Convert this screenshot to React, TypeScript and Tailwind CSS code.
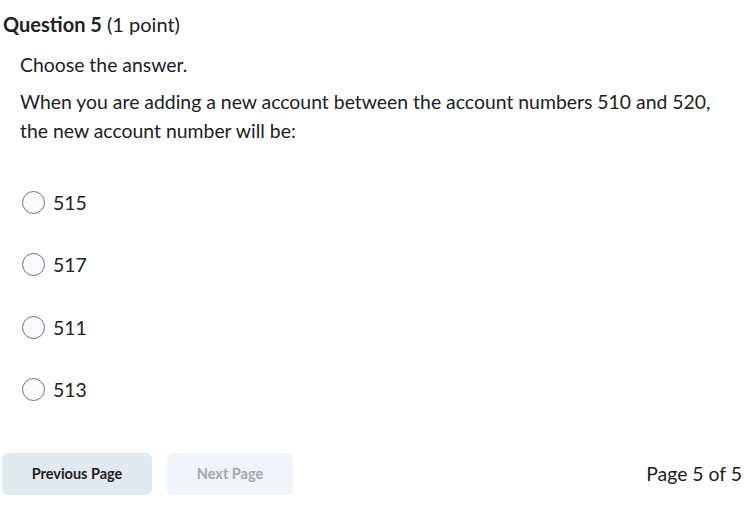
import React from 'react';

const options = ['515', '517', '511', '513'];

const App = () => {
  return (
    <div className="w-[756px] h-[506px] bg-white text-[#202122] font-['Lato','Liberation_Sans',sans-serif] overflow-hidden">
      <h2 className="pl-[3px] pt-[10px] text-[20px] leading-[28px]">
        <span className="font-bold">Question 5</span> (1 point)
      </h2>
      <div className="pl-[20px] pr-2">
        <p className="mt-[12px] text-[19.4px] leading-[29px]">Choose the answer.</p>
        <p className="mt-[8px] text-[19.4px] leading-[29px]">
          When you are adding a new account between the account numbers 510 and 520,
          <br />
          the new account number will be:
        </p>
      </div>
      <div className="mt-[46px] pl-[22px] flex flex-col gap-[39.3px]">
        {options.map((o) => (
          <label key={o} className="flex items-center gap-[8px] h-[23px]">
            <span className="w-[23px] h-[23px] rounded-full border border-[#6e7376] bg-[#f9fbff]" />
            <span className="text-[19.4px] leading-[23px]">{o}</span>
          </label>
        ))}
      </div>
      <div className="mt-[52px] pl-[2px] pr-[14px] flex items-center">
        <button className="h-[42px] w-[150px] rounded-[6px] bg-[#e3e9f1] text-[14.5px] font-bold text-[#202122]">
          Previous Page
        </button>
        <button className="ml-[15px] h-[42px] w-[126px] rounded-[6px] bg-[#f1f5fa] text-[14.5px] font-bold text-[#a3a7aa]">
          Next Page
        </button>
        <span className="ml-auto text-[19.4px]">Page 5 of 5</span>
      </div>
    </div>
  );
};

export default App;
